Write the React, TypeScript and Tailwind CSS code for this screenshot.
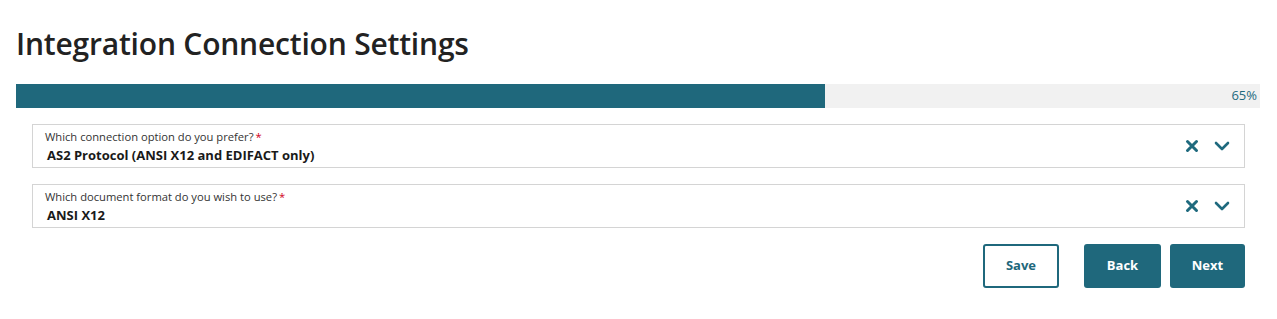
const teal = "#1f6a7e";

function ClearIcon() {
  return (
    <svg width="14" height="14" viewBox="0 0 14 14" fill="none">
      <path d="M2.5 2.5l9 9M11.5 2.5l-9 9" stroke={teal} strokeWidth="3" strokeLinecap="round" />
    </svg>
  );
}

function ChevronIcon() {
  return (
    <svg width="16" height="10" viewBox="0 0 16 10" fill="none">
      <path d="M2 2l6 6 6-6" stroke={teal} strokeWidth="2.6" strokeLinecap="round" strokeLinejoin="round" />
    </svg>
  );
}

function SelectField({ label, value }: { label: string; value: string }) {
  return (
    <div className="flex h-[44px] items-center justify-between border border-[#d4d4d4] bg-white pl-3 pr-[14px]">
      <div className="flex flex-col">
        <span className="text-[11.2px] leading-[14px] text-[#333]">
          {label}
          <span className="ml-[2px] text-[#d0021b]">*</span>
        </span>
        <span className="mt-[3px] pl-[2px] text-[13px] font-bold leading-[16px] text-[#1a1a1a]">{value}</span>
      </div>
      <div className="flex items-center gap-[15px]">
        <ClearIcon />
        <ChevronIcon />
      </div>
    </div>
  );
}

export default function App() {
  const progress = 65;

  return (
    <div className="min-h-[319px] bg-white px-4 pt-[26px] font-['Open_Sans',sans-serif]">
      <h1 className="text-[30px] font-semibold leading-[36px] tracking-[-0.2px] text-[#222]">Integration Connection Settings</h1>

      {/* Progress */}
      <div className="mt-[22px] mr-[1px] flex h-6 items-center bg-[#f1f1f1]">
        <div className="h-full bg-[#1f687c]" style={{ width: `${progress}%` }} />
        <span className="ml-auto pr-[3px] text-[13px] text-[#1f6a7e]">{progress}%</span>
      </div>

      <div className="mx-4 mt-4 flex flex-col gap-4">
        <SelectField label="Which connection option do you prefer?" value="AS2 Protocol (ANSI X12 and EDIFACT only)" />
        <SelectField label="Which document format do you wish to use?" value="ANSI X12" />
      </div>

      <div className="mx-4 mt-4 flex justify-end">
        <button className="h-[44px] w-[76px] rounded-[3px] border-2 border-[#1f687c] bg-white text-[13px] font-bold text-[#1f687c]">
          Save
        </button>
        <button className="ml-[25px] h-[44px] w-[77px] rounded-[3px] bg-[#1f687c] text-[13px] font-bold text-white">
          Back
        </button>
        <button className="ml-[9px] h-[44px] w-[75px] rounded-[3px] bg-[#1f687c] text-[13px] font-bold text-white">
          Next
        </button>
      </div>
    </div>
  );
}
